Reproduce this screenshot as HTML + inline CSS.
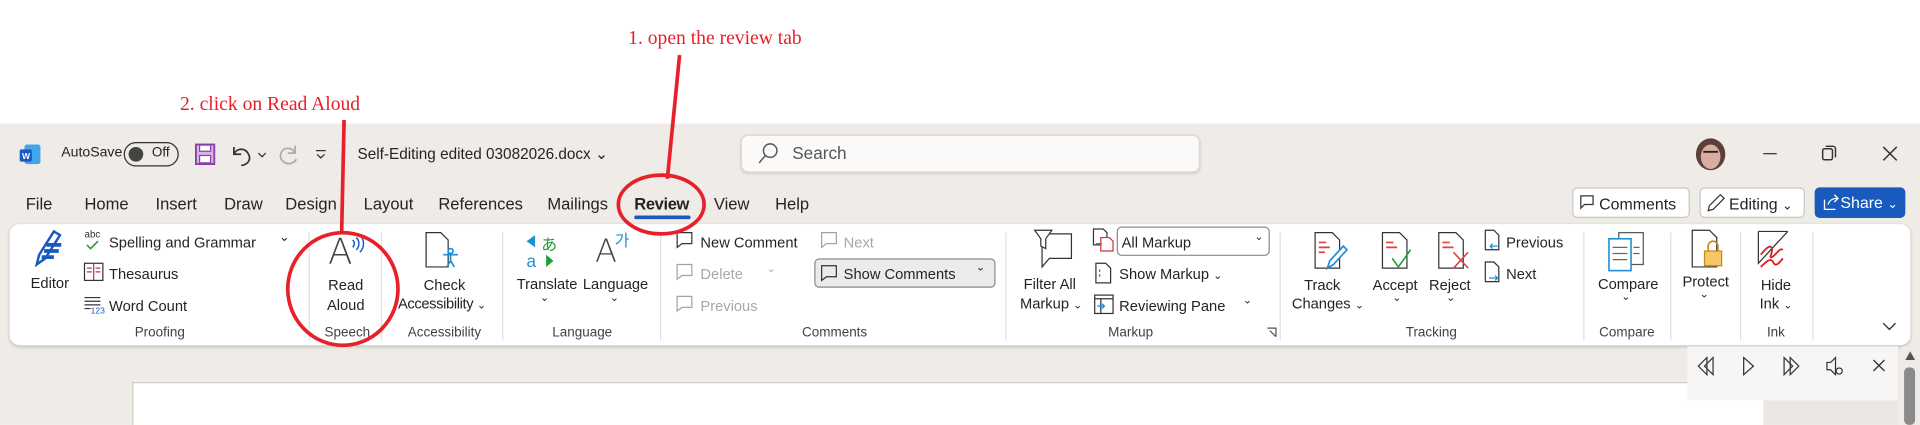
<!DOCTYPE html>
<html><head><meta charset="utf-8"><style>
*{margin:0;padding:0;box-sizing:border-box}
html,body{width:1920px;height:424px;overflow:hidden;background:#fff}
#s{position:absolute;left:0;top:0;width:1568px;height:347px;transform:scale(1.22449);transform-origin:0 0;font-family:"Liberation Sans",sans-serif;color:#242424}
.a{position:absolute;white-space:nowrap}
.t{font-size:13.5px}
.r{font-size:12px}
.g{color:#a8a8a8}
.lab{font-size:11px;color:#424242}
.sep{position:absolute;top:190px;width:1px;height:88px;background:#e0e0e0}
.ann{font-family:"Liberation Serif",serif;color:#e8202a;font-size:16px}
.thin{font-family:"DejaVu Sans",sans-serif;font-weight:200;color:#444}
</style></head><body><div id="s">
<div class="a" style="left:0;top:101px;width:1568px;height:246px;background:#efebe7"></div>
<div class="a ann" style="left:513px;top:23px">1. open the review tab</div>
<div class="a ann" style="left:147px;top:77px">2. click on Read Aloud</div>

<!-- title bar -->
<svg class="a" style="left:16px;top:117px" width="18" height="18"><rect x="4" y="1" width="13" height="16" rx="2" fill="#41a5ee"/><rect x="0" y="5" width="10" height="10" rx="1.5" fill="#185abd"/><text x="2" y="13" font-size="7" fill="#fff" font-family="Liberation Sans" font-weight="bold">W</text></svg>
<div class="a" style="left:50px;top:119px;font-size:11.5px">AutoSave</div>
<div class="a" style="left:101px;top:116px;width:45px;height:20px;border:1.3px solid #333;border-radius:10px"><div style="position:absolute;left:3px;top:3px;width:12px;height:12px;border-radius:50%;background:#444"></div><span style="position:absolute;left:22px;top:2px;font-size:11px">Off</span></div>
<svg class="a" style="left:159px;top:117px" width="17" height="18"><rect x="1" y="1" width="15" height="16" fill="#d8b5e8" stroke="#8a3fa8" stroke-width="1.5"/><rect x="4" y="1.5" width="9" height="5" fill="#fff" stroke="#8a3fa8"/><rect x="4" y="10" width="9" height="6" fill="#fff" stroke="#8a3fa8"/></svg>
<svg class="a" style="left:187px;top:116px" width="40" height="20"><path d="M4 4v6h6M4 10c2-5 9-6 12 0s-3 9-6 9" fill="none" stroke="#333" stroke-width="1.4"/><path d="M24 9l3 3 3-3" fill="none" stroke="#333"/></svg>
<svg class="a" style="left:225px;top:115px" width="22" height="22"><path d="M16 4v6h-6M16 10c-3-6-12-5-12 3a7 7 0 0 0 13 2" fill="none" stroke="#aaa" stroke-width="1.4"/></svg>
<svg class="a" style="left:257px;top:120px" width="10" height="12"><path d="M1 3h8M2 6l3 3 3-3" fill="none" stroke="#333"/></svg>
<div class="a" style="left:292px;top:118px;font-size:12.5px">Self-Editing edited 03082026.docx ⌄</div>
<div class="a" style="left:605px;top:110px;width:375px;height:31px;background:#fbfaf9;border:1px solid #dcd8d4;border-radius:6px;box-shadow:0 1px 2px rgba(0,0,0,.12)"></div>
<svg class="a" style="left:618px;top:116px" width="18" height="18"><circle cx="11" cy="7" r="5.5" fill="none" stroke="#555" stroke-width="1.2"/><path d="M7 11l-5 6" stroke="#555" stroke-width="1.2"/></svg>
<div class="a" style="left:647px;top:117px;font-size:14px;color:#555">Search</div>
<svg class="a" style="left:1384px;top:112px" width="26" height="28"><ellipse cx="13" cy="14" rx="12" ry="13" fill="#5a4038"/><ellipse cx="13" cy="16" rx="8" ry="10" fill="#d9aea0"/><path d="M7 12h12" stroke="#222" stroke-width="1.5"/></svg>
<div class="a" style="left:1440px;top:125px;width:11px;height:1.3px;background:#333"></div>
<svg class="a" style="left:1487px;top:118px" width="14" height="14"><rect x="1.5" y="3.5" width="8" height="9" rx="1.5" fill="none" stroke="#333" stroke-width="1.2"/><path d="M4 1.5h6a2 2 0 0 1 2 2v7" fill="none" stroke="#333" stroke-width="1.2"/></svg>
<svg class="a" style="left:1537px;top:119px" width="13" height="13"><path d="M1 1l11 11M12 1L1 12" stroke="#333" stroke-width="1.2"/></svg>

<!-- tabs -->
<div class="a t" style="left:21px;top:159px">File</div>
<div class="a t" style="left:69px;top:159px">Home</div>
<div class="a t" style="left:127px;top:159px">Insert</div>
<div class="a t" style="left:183px;top:159px">Draw</div>
<div class="a t" style="left:233px;top:159px">Design</div>
<div class="a t" style="left:297px;top:159px">Layout</div>
<div class="a t" style="left:358px;top:159px">References</div>
<div class="a t" style="left:447px;top:159px">Mailings</div>
<div class="a t" style="left:518px;top:159px;font-weight:bold;letter-spacing:-.3px">Review</div>
<div class="a" style="left:518px;top:176px;width:46px;height:3px;background:#185abd;border-radius:2px"></div>
<div class="a t" style="left:583px;top:159px">View</div>
<div class="a t" style="left:633px;top:159px">Help</div>
<div class="a" style="left:1284px;top:153px;width:96px;height:25px;background:#fff;border:1px solid #c8c8c8;border-radius:4px;font-size:13px;padding:5px 0 0 21px">Comments</div>
<svg class="a" style="left:1290px;top:159px" width="12" height="13"><path d="M1 1h10v7H4l-3 3z" fill="none" stroke="#333"/></svg>
<div class="a" style="left:1388px;top:153px;width:86px;height:25px;background:#fff;border:1px solid #c8c8c8;border-radius:4px;font-size:13px;padding:5px 0 0 23px">Editing <span style="font-size:10px">⌄</span></div>
<svg class="a" style="left:1393px;top:157px" width="16" height="17"><path d="M2 15l1-4 9-9 3 3-9 9z" fill="none" stroke="#333"/></svg>
<div class="a" style="left:1482px;top:153px;width:74px;height:25px;background:#185abd;border-radius:4px;color:#fff;font-size:13px;padding:5px 0 0 21px">Share <span style="font-size:10px">⌄</span></div>
<svg class="a" style="left:1488px;top:158px" width="14" height="15"><path d="M2 5v8h9M5 9c1-4 4-5 8-5M10 1l3 3-3 3" fill="none" stroke="#fff" stroke-width="1.1"/></svg>

<!-- ribbon -->
<div class="a" style="left:8px;top:183px;width:1552px;height:99px;background:#fff;border-radius:8px;box-shadow:0 1px 3px rgba(0,0,0,.18)"></div>
<div class="sep" style="left:252px"></div><div class="sep" style="left:311px"></div><div class="sep" style="left:410px"></div><div class="sep" style="left:539px"></div><div class="sep" style="left:821px"></div><div class="sep" style="left:1045px"></div><div class="sep" style="left:1293px"></div><div class="sep" style="left:1364px"></div><div class="sep" style="left:1421px"></div><div class="sep" style="left:1480px"></div>

<svg class="a" style="left:24px;top:186px" width="34" height="36"><path d="M6 30l2-8L20 3l5 3-12 19z" fill="none" stroke="#185abd" stroke-width="2"/><path d="M14 14h12M12 19h12M10 24h10" stroke="#185abd" stroke-width="3"/></svg>
<div class="a r" style="left:25px;top:224px">Editor</div>
<div class="a" style="left:69px;top:187px;font-size:8px;color:#333">abc</div>
<svg class="a" style="left:70px;top:196px" width="12" height="8"><path d="M1 4l3 3 6-6" fill="none" stroke="#1f9d3a" stroke-width="1.3"/></svg>
<div class="a r" style="left:89px;top:191px">Spelling and Grammar</div>
<div class="a" style="left:228px;top:189px;font-size:10px">⌄</div>
<svg class="a" style="left:68px;top:214px" width="17" height="16"><rect x="1" y="1" width="15" height="14" fill="none" stroke="#333"/><path d="M8.5 1v14M3 5h4M3 8h4M10 5h4M10 8h4" stroke="#c33"/></svg>
<div class="a r" style="left:89px;top:217px">Thesaurus</div>
<svg class="a" style="left:68px;top:241px" width="18" height="16"><path d="M1 2h13M1 5h13M1 8h13M1 11h5" stroke="#333"/><text x="6" y="15" font-size="7" fill="#185abd" font-family="Liberation Sans">123</text></svg>
<div class="a r" style="left:89px;top:243px">Word Count</div>
<div class="a lab" style="left:110px;top:266px">Proofing</div>

<div class="a thin" style="left:268px;top:188px;font-size:29px">A</div>
<svg class="a" style="left:286px;top:190px" width="14" height="18"><path d="M2 6a4 4 0 0 1 0 6M5 4a7 7 0 0 1 0 10M8 2a10 10 0 0 1 0 14" fill="none" stroke="#185abd" stroke-width="1.2"/></svg>
<div class="a r" style="left:267px;top:225px;text-align:center;line-height:16px">Read<br>Aloud</div>
<div class="a lab" style="left:265px;top:266px">Speech</div>

<svg class="a" style="left:346px;top:189px" width="34" height="34"><path d="M2 1h12l6 6v22H2z" fill="#fff" stroke="#333"/><circle cx="22" cy="16" r="2" fill="none" stroke="#1e8fd6" stroke-width="1.4"/><path d="M16 19h12M22 19v5l-3 5M22 24l3 5" fill="none" stroke="#1e8fd6" stroke-width="1.4"/></svg>
<div class="a r" style="left:346px;top:226px">Check</div>
<div class="a r" style="left:325px;top:241px;letter-spacing:-.3px">Accessibility <span style="font-size:9px">⌄</span></div>
<div class="a lab" style="left:333px;top:266px">Accessibility</div>

<svg class="a" style="left:428px;top:190px" width="34" height="30"><path d="M9 2L2 7l7 5" fill="#1e8fd6"/><text x="2" y="28" font-size="14" fill="#1e8fd6" font-family="Liberation Sans">a</text><text x="14" y="14" font-size="13" fill="#1f9d3a" font-family="Noto Sans CJK JP">あ</text><path d="M18 18l6 5-6 5z" fill="#1f9d3a"/></svg>
<div class="a r" style="left:422px;top:225px">Translate</div>
<div class="a" style="left:441px;top:238px;font-size:9px">⌄</div>
<div class="a thin" style="left:486px;top:191px;font-size:26px">A</div>
<div class="a" style="left:502px;top:186px;font-size:13px;color:#1e8fd6;font-family:'Noto Sans CJK KR',sans-serif">가</div>
<div class="a r" style="left:476px;top:225px">Language</div>
<div class="a" style="left:498px;top:238px;font-size:9px">⌄</div>
<div class="a lab" style="left:451px;top:266px">Language</div>

<svg class="a" style="left:551px;top:188px" width="16" height="16"><path d="M2 2h12v9H6l-4 3z" fill="none" stroke="#333"/></svg>
<div class="a r" style="left:572px;top:191px">New Comment</div>
<svg class="a" style="left:551px;top:214px" width="16" height="16" opacity=".45"><path d="M2 2h12v9H6l-4 3z" fill="none" stroke="#333"/></svg>
<div class="a r g" style="left:572px;top:217px">Delete</div>
<div class="a g" style="left:626px;top:214px;font-size:9px">⌄</div>
<svg class="a" style="left:551px;top:240px" width="16" height="16" opacity=".45"><path d="M2 2h12v9H6l-4 3z" fill="none" stroke="#333"/></svg>
<div class="a r g" style="left:572px;top:243px">Previous</div>
<svg class="a" style="left:669px;top:188px" width="16" height="16" opacity=".45"><path d="M2 2h12v9H6l-4 3z" fill="none" stroke="#333"/></svg>
<div class="a r g" style="left:689px;top:191px">Next</div>
<div class="a" style="left:665px;top:211px;width:148px;height:24px;background:#ebebeb;border:1px solid #8a8a8a;border-radius:4px"></div>
<svg class="a" style="left:669px;top:215px" width="16" height="16"><path d="M2 2h12v9H6l-4 3z" fill="none" stroke="#333"/></svg>
<div class="a r" style="left:689px;top:217px">Show Comments</div>
<div class="a" style="left:797px;top:213px;font-size:9px">⌄</div>
<div class="a lab" style="left:655px;top:266px">Comments</div>

<svg class="a" style="left:842px;top:187px" width="36" height="36"><path d="M9 4h24v20H15l-6 7z" fill="none" stroke="#333"/><path d="M3 1h14l-5 7v8l-4-2V8z" fill="#fff" stroke="#333"/></svg>
<div class="a r" style="left:836px;top:225px">Filter All</div>
<div class="a r" style="left:833px;top:241px">Markup <span style="font-size:9px">⌄</span></div>
<svg class="a" style="left:891px;top:186px" width="20" height="20"><path d="M2 1h8l3 3v10H2z" fill="none" stroke="#333"/><path d="M8 8h7l3 3v8H8z" fill="#fff" stroke="#c33"/><path d="M4 13h5" stroke="#1e8fd6"/></svg>
<div class="a" style="left:912px;top:185px;width:125px;height:24px;border:1px solid #8a8a8a;border-radius:4px;font-size:12px;padding:5px 0 0 3px">All Markup<span style="position:absolute;right:4px;top:2px;font-size:9px">⌄</span></div>
<svg class="a" style="left:894px;top:214px" width="14" height="18"><path d="M1 1h8l4 4v12H1z" fill="none" stroke="#333"/><path d="M4 6v2M4 10v2" stroke="#c33"/></svg>
<div class="a r" style="left:914px;top:217px">Show Markup <span style="font-size:9px">⌄</span></div>
<svg class="a" style="left:893px;top:240px" width="17" height="17"><rect x="1" y="1" width="15" height="15" fill="none" stroke="#333"/><path d="M1 4h15M6 4v12" stroke="#333"/><path d="M3 10h6M7 8l2 2-2 2" stroke="#1e8fd6" fill="none"/></svg>
<div class="a r" style="left:914px;top:243px">Reviewing Pane</div>
<div class="a" style="left:1015px;top:240px;font-size:9px">⌄</div>
<div class="a lab" style="left:905px;top:266px">Markup</div>
<svg class="a" style="left:1034px;top:267px" width="9" height="9"><path d="M1 1h7v7M3 3l5 5" fill="none" stroke="#555"/></svg>

<svg class="a" style="left:1072px;top:189px" width="34" height="36"><path d="M2 1h14l6 6v23H2z" fill="#fff" stroke="#333"/><path d="M5 9h6M5 13h9M5 17h5" stroke="#e04040" stroke-width="1.4"/><path d="M12 30l2-6 11-12 3 3-11 12z" fill="#fff" stroke="#1e8fd6" stroke-width="1.4"/></svg>
<div class="a r" style="left:1065px;top:226px">Track</div>
<div class="a r" style="left:1055px;top:241px">Changes <span style="font-size:9px">⌄</span></div>
<svg class="a" style="left:1127px;top:189px" width="34" height="36"><path d="M2 1h14l6 6v23H2z" fill="#fff" stroke="#333"/><path d="M5 9h6M5 13h9" stroke="#e04040" stroke-width="1.4"/><path d="M10 22l5 7 10-14" fill="none" stroke="#1f9d3a" stroke-width="1.3"/></svg>
<div class="a r" style="left:1121px;top:226px">Accept</div>
<div class="a" style="left:1137px;top:238px;font-size:9px">⌄</div>
<svg class="a" style="left:1173px;top:189px" width="30" height="36"><path d="M2 1h14l6 6v23H2z" fill="#fff" stroke="#333"/><path d="M5 9h6M5 13h9" stroke="#e04040" stroke-width="1.4"/><path d="M14 17l12 13M26 17L14 30" stroke="#e04040" stroke-width="1.3"/></svg>
<div class="a r" style="left:1167px;top:226px">Reject</div>
<div class="a" style="left:1181px;top:238px;font-size:9px">⌄</div>
<svg class="a" style="left:1212px;top:187px" width="14" height="20"><path d="M1 1h7l4 4v12H1z" fill="none" stroke="#333"/><path d="M11 14H5M7 12l-2 2 2 2" stroke="#1e8fd6" fill="none"/></svg>
<div class="a r" style="left:1230px;top:191px">Previous</div>
<svg class="a" style="left:1212px;top:213px" width="14" height="20"><path d="M1 1h7l4 4v12H1z" fill="none" stroke="#333"/><path d="M4 14h7M9 12l2 2-2 2" stroke="#1e8fd6" fill="none"/></svg>
<div class="a r" style="left:1230px;top:217px">Next</div>
<div class="a lab" style="left:1148px;top:266px">Tracking</div>

<svg class="a" style="left:1312px;top:189px" width="32" height="34"><rect x="10" y="1" width="20" height="26" fill="#fff" stroke="#555"/><rect x="2" y="6" width="18" height="26" fill="#fff" stroke="#1e8fd6" stroke-width="1.3"/><path d="M5 13h12M5 18h12M5 23h12M22 13h5M22 18h5" stroke="#666"/></svg>
<div class="a r" style="left:1305px;top:225px">Compare</div>
<div class="a" style="left:1324px;top:237px;font-size:9px">⌄</div>
<div class="a lab" style="left:1306px;top:266px">Compare</div>

<svg class="a" style="left:1380px;top:187px" width="32" height="36"><path d="M2 1h14l6 6v24H2z" fill="#fff" stroke="#333"/><rect x="12" y="18" width="14" height="12" fill="#f5c768" stroke="#c68a14"/><path d="M15 18v-4a4 4 0 0 1 8 0v4" fill="none" stroke="#c68a14" stroke-width="1.3"/></svg>
<div class="a r" style="left:1374px;top:223px">Protect</div>
<div class="a" style="left:1388px;top:235px;font-size:9px">⌄</div>

<svg class="a" style="left:1434px;top:188px" width="32" height="36"><path d="M2 1h24" stroke="#333"/><path d="M2 1v26L26 1" fill="none" stroke="#333"/><path d="M4 20c4-5 8-9 9-5s-3 8 0 7 6-8 9-6M4 30c4-4 8-8 10-4s4 2 8-3" fill="none" stroke="#e02020" stroke-width="1.5"/></svg>
<div class="a r" style="left:1438px;top:226px">Hide</div>
<div class="a r" style="left:1437px;top:241px">Ink <span style="font-size:9px">⌄</span></div>
<div class="a lab" style="left:1443px;top:266px">Ink</div>
<svg class="a" style="left:1537px;top:263px" width="12" height="8"><path d="M1 1l5 5 5-5" fill="none" stroke="#333" stroke-width="1.1"/></svg>

<!-- document area -->
<div class="a" style="left:108px;top:312px;width:1332px;height:35px;background:#fff;border-top:1px solid #d0ccc8;border-left:1px solid #d0ccc8"></div>
<div class="a" style="left:1440px;top:312px;width:110px;height:35px;background:#ebe7e3"></div>
<div class="a" style="left:1378px;top:283px;width:172px;height:44px;background:#f7f6f5"></div>
<svg class="a" style="left:1386px;top:290px" width="160" height="20"><path d="M8 2L1 9l7 7zM13 2L6 9l7 7z" fill="none" stroke="#333"/><path d="M38 2l8 7-8 7z" fill="none" stroke="#333"/><path d="M71 2l7 7-7 7zM76 2l7 7-7 7z" fill="none" stroke="#333"/><path d="M106 6h3l4-4v14l-4-4h-3z" fill="none" stroke="#333"/><circle cx="116" cy="13" r="2.5" fill="none" stroke="#333"/><path d="M144 4l9 9M153 4l-9 9" stroke="#333" stroke-width="1.1"/></svg>
<div class="a" style="left:1553px;top:283px;width:15px;height:64px;background:#efebe7"></div>
<svg class="a" style="left:1555px;top:286px" width="10" height="10"><path d="M5 1l4 7H1z" fill="#555"/></svg>
<div class="a" style="left:1555px;top:300px;width:9px;height:47px;background:#8a8a8a;border-radius:4px"></div>

<!-- annotations -->
<svg class="a" style="left:0;top:0" width="1568" height="347">
<path d="M555 45L545 146" stroke="#e8202a" stroke-width="3"/>
<path d="M281 98L279 190" stroke="#e8202a" stroke-width="3"/>
<ellipse cx="540" cy="167" rx="35" ry="24" fill="none" stroke="#e8202a" stroke-width="3"/>
<ellipse cx="280" cy="236" rx="45" ry="46" fill="none" stroke="#e8202a" stroke-width="3"/>
</svg>
</div></body></html>
